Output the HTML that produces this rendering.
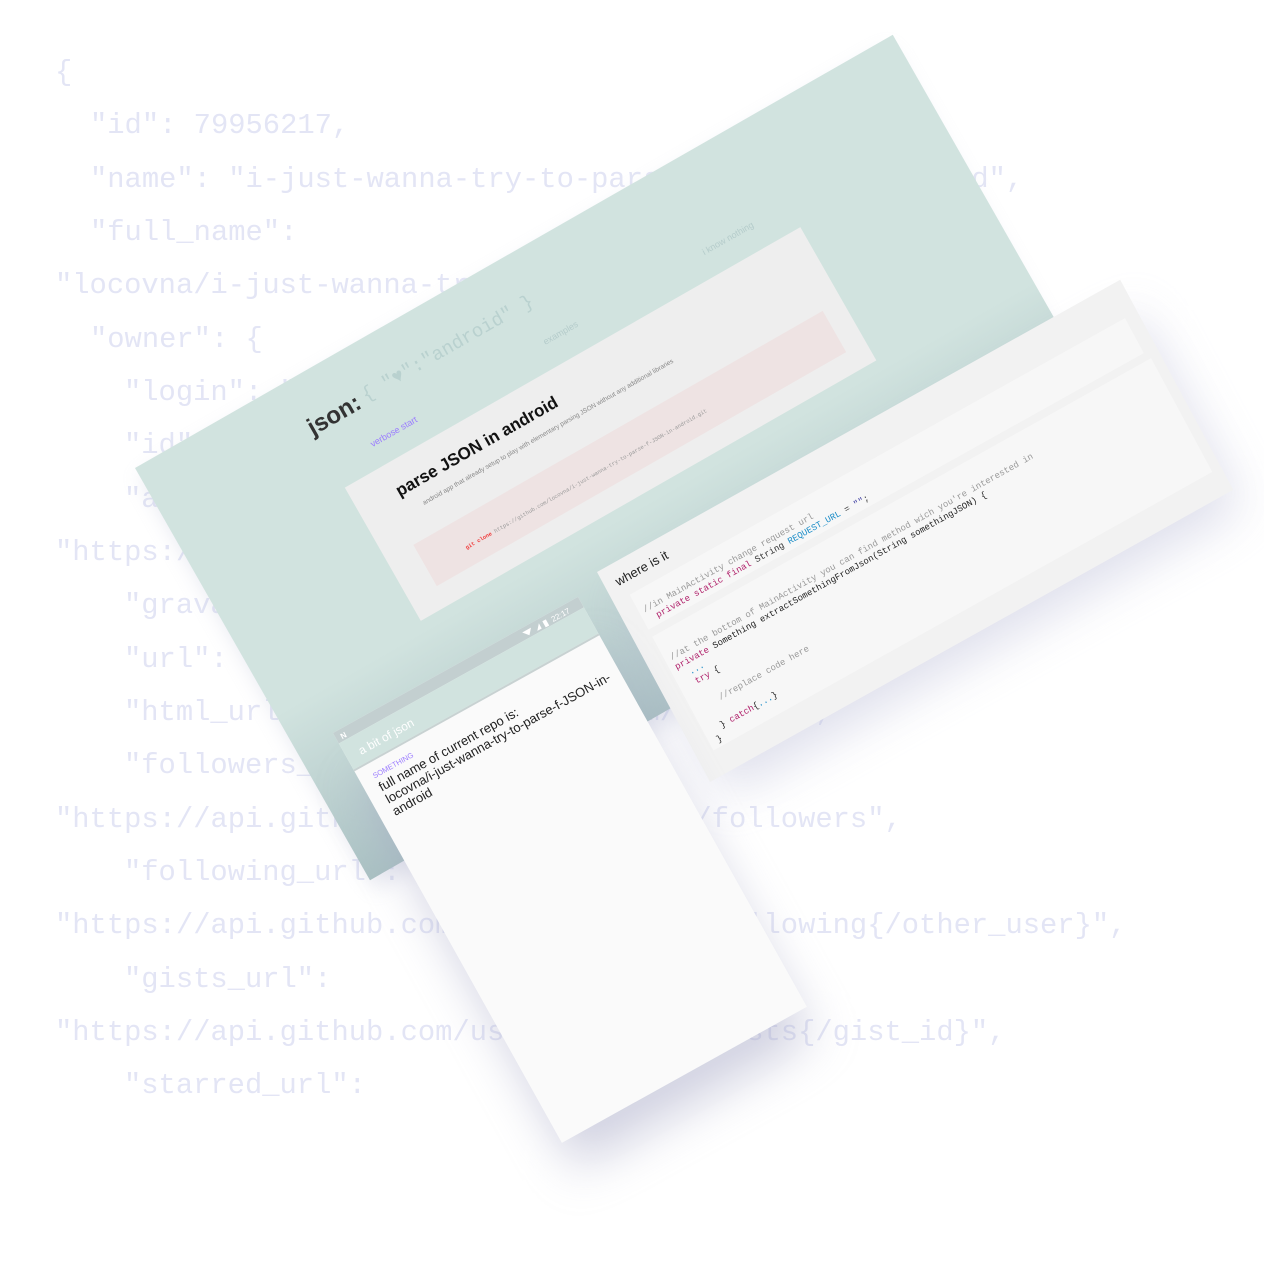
<!DOCTYPE html>
<html><head><meta charset="utf-8"><style>
html,body{margin:0;padding:0;background:#fff;width:1264px;height:1264px;overflow:hidden}
svg{display:block}
.bg{font-family:"Liberation Mono",monospace;font-size:28.8px;fill:#e3e5f5}
.s{font-family:"Liberation Sans",sans-serif}
.m{font-family:"Liberation Mono",monospace}
</style></head><body>
<svg width="1264" height="1264" viewBox="0 0 1264 1264" xmlns="http://www.w3.org/2000/svg">
<defs>
<filter id="sh" x="-30%" y="-30%" width="160%" height="160%"><feGaussianBlur stdDeviation="24"/></filter>
<filter id="sh2" x="-30%" y="-30%" width="160%" height="160%"><feGaussianBlur stdDeviation="10"/></filter>
<linearGradient id="tg" x1="0" y1="0" x2="0" y2="1">
<stop offset="0" stop-color="#d1e3df"/><stop offset="0.6" stop-color="#d1e3df"/><stop offset="1" stop-color="#a9c0c2"/></linearGradient>
</defs>
<g class="bg">
<text x="55" y="80">{</text>
<text x="90" y="133">"id": 79956217,</text>
<text x="90" y="187">"name": "i-just-wanna-try-to-parse-f-JSON-in-android",</text>
<text x="90" y="240">"full_name":</text>
<text x="55" y="293">"locovna/i-just-wanna-try-to-parse-f-JSON-in-android",</text>
<text x="90" y="347">"owner": {</text>
<text x="124" y="400">"login": "locovna",</text>
<text x="124" y="453">"id": 23455543,</text>
<text x="124" y="507">"avatar_url":</text>
<text x="55" y="560">"https://avatars.githubusercontent.com/u/23455543",</text>
<text x="124" y="613">"gravatar_id": "",</text>
<text x="124" y="667">"url": "https://api.github.com/users/locovna",</text>
<text x="124" y="720">"html_url": "https://github.com/locovna",</text>
<text x="124" y="773">"followers_url":</text>
<text x="55" y="827">"https://api.github.com/users/locovna/followers",</text>
<text x="124" y="880">"following_url":</text>
<text x="55" y="933">"https://api.github.com/users/locovna/following{/other_user}",</text>
<text x="124" y="987">"gists_url":</text>
<text x="55" y="1040">"https://api.github.com/users/locovna/gists{/gist_id}",</text>
<text x="124" y="1093">"starred_url":</text>
</g>

<!-- teal panel -->
<g transform="matrix(0.871,-0.498,0.5,0.877,135,468)">
<rect x="0" y="10" width="860" height="470" fill="#b4b8d0" opacity="0.3" filter="url(#sh2)"/>
<rect x="0" y="0" width="870" height="470" fill="url(#tg)"/>
<text x="170" y="60" class="s" font-size="24" font-weight="bold" fill="#333">json:</text>
<text x="233" y="56" class="m" font-size="19" fill="#b9d1cf">{ "♥":"android" }</text>
<text x="216" y="99" class="s" font-size="9" fill="#9b7cff">verbose start</text>
<text x="416" y="96" class="s" font-size="9" fill="#b5cccb">examples</text>
<text x="598" y="97" class="s" font-size="9" fill="#b5cccb">i know nothing</text>
<rect x="172" y="120" width="523" height="152" fill="#eeeeee"/>
<text x="215" y="155" class="s" font-size="17" font-weight="bold" fill="#111">parse JSON in android</text>
<text x="232" y="174" class="s" font-size="6.5" fill="#888">android app that already setup to play with elementary parsing JSON without any additional libraries</text>
<rect x="203" y="203" width="470" height="47" fill="#eee3e3"/>
<text x="247" y="233" class="m" font-size="5.5" fill="#999"><tspan fill="#f03a3a" font-weight="bold">git clone</tspan> https://github.com/locovna/i-just-wanna-try-to-parse-f-JSON-in-android.git</text>
</g>

<!-- code panel -->
<g transform="matrix(0.872,-0.487,0.471,0.875,597,572)">
<rect x="10" y="40" width="590" height="220" fill="#b8bad6" opacity="0.45" filter="url(#sh)"/>
<rect x="0" y="0" width="600" height="240" fill="#f2f2f2"/>
<rect x="18" y="36" width="568" height="40" fill="#f7f7f7"/>
<rect x="18" y="84" width="572" height="130" fill="#f7f7f7"/>
<text x="12" y="23" class="s" font-size="13" fill="#222">where is it</text>
<g class="m" font-size="9">
<text x="23" y="59" fill="#999">//in MainActivity change request url</text>
<text x="32" y="70"><tspan fill="#b0206a">private static final</tspan><tspan fill="#333"> String </tspan><tspan fill="#1a8cc7">REQUEST_URL</tspan><tspan fill="#333"> = </tspan><tspan fill="#3a3aa0">""</tspan><tspan fill="#333">;</tspan></text>
<text x="24" y="114" fill="#999">//at the bottom of MainActivity you can find method wich you're interested in</text>
<text x="24" y="125"><tspan fill="#b0206a">private</tspan><tspan fill="#222"> Something extractSomethingFromJson(String somethingJSON) {</tspan></text>
<text x="34" y="136" fill="#1a8cc7">...</text>
<text x="35" y="147"><tspan fill="#b0206a">try</tspan><tspan fill="#222"> {</tspan></text>
<text x="48" y="173" fill="#999">//replace code here</text>
<text x="36" y="198"><tspan fill="#222">} </tspan><tspan fill="#b0206a">catch</tspan><tspan fill="#222">{</tspan><tspan fill="#1a8cc7">...</tspan><tspan fill="#222">}</tspan></text>
<text x="26" y="209" fill="#222">}</text>
</g>
</g>

<!-- phone -->
<g transform="matrix(0.875,-0.486,0.487,0.872,333,733)">
<rect x="0" y="60" width="270" height="440" fill="#a4a6c4" opacity="0.5" filter="url(#sh)"/>
<rect x="0" y="0" width="280" height="470" fill="#fafafa"/>
<rect x="0" y="0" width="280" height="12" fill="#c3cfd0"/>
<rect x="0" y="12" width="280" height="30" fill="#d1e3df"/>
<rect x="0" y="42" width="280" height="2" fill="#c8d2d2"/>
<text x="5" y="10" class="s" font-size="8" font-weight="bold" fill="#fff">N</text>
<text x="246" y="10" class="s" font-size="8" fill="#fff">22:17</text>
<path d="M214 4 L224 4 L219 10 Z" fill="#fff"/><path d="M228 10 L233 4 L233 10 Z" fill="#fff"/><rect x="237" y="4" width="4" height="7" fill="#fff"/>
<text x="14" y="33" class="s" font-size="12" fill="#fff">a bit of json</text>
<text x="14" y="60" class="s" font-size="7.5" fill="#9b7cff">SOMETHING</text>
<g class="s" font-size="13" fill="#222">
<text x="14" y="75">full name of current repo is:</text>
<text x="14" y="89">locovna/i-just-wanna-try-to-parse-f-JSON-in-</text>
<text x="14" y="103">android</text>
</g>
</g>
</svg>
</body></html>
